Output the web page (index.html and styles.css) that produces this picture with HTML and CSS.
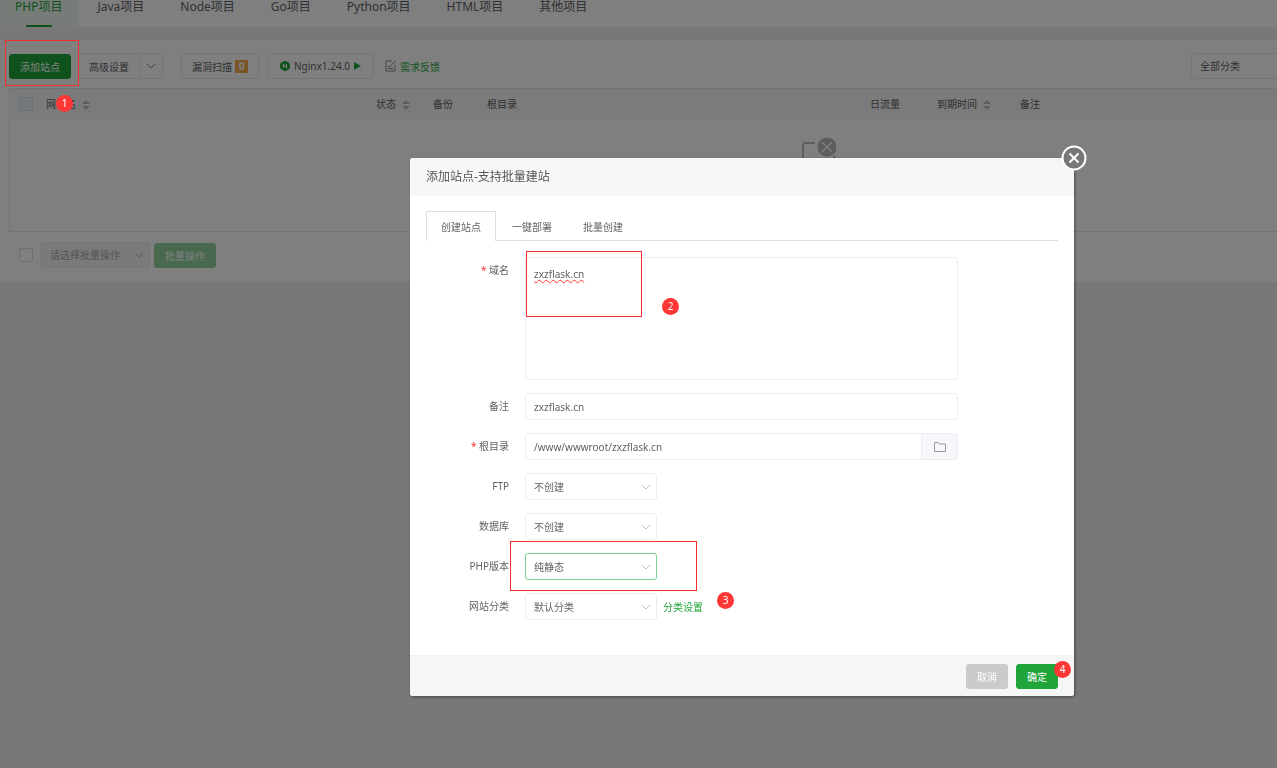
FILE: index.html
```
<!DOCTYPE html>
<html lang="zh-CN">
<head>
    <meta charset="UTF-8">
    <meta name="viewport" content="width=device-width, initial-scale=1.0">
    <title>网站管理 - 添加站点</title>
    <link rel="stylesheet" href="styles.css">
</head>
<body>
    <nav class="project-tabs">
        <a href="#" class="active">PHP项目</a>
        <a href="#">Java项目</a>
        <a href="#">Node项目</a>
        <a href="#">Go项目</a>
        <a href="#">Python项目</a>
        <a href="#">HTML项目</a>
        <a href="#">其他项目</a>
    </nav>

    <main class="panel">
        <div class="toolbar">
            <div class="add-wrap">
                <button type="button" class="btn btn-green">添加站点</button>
                <span class="mark-box mark-box-add"></span>
                <span class="mark mark-add">1</span>
            </div>
            <div class="btn-group">
                <button type="button" class="btn btn-plain">高级设置</button>
                <button type="button" class="btn btn-plain btn-arrow" aria-label="更多设置">
                    <svg width="10" height="10" viewBox="0 0 10 10"><path d="M1 3l4 4 4-4" fill="none" stroke="#888" stroke-width="1"/></svg>
                </button>
            </div>
            <button type="button" class="btn btn-plain btn-scan">漏洞扫描<span class="count">0</span></button>
            <button type="button" class="btn btn-plain btn-nginx">
                <svg width="10" height="10" viewBox="0 0 10 10"><path d="M5 0l4.3 2.5v5L5 10 .7 7.5v-5z" fill="#20a53a" stroke="#20a53a"/><path d="M3.4 7V3l3.2 4V3" fill="none" stroke="#fff" stroke-width="1"/></svg>
                Nginx1.24.0
                <svg width="7" height="8" viewBox="0 0 7 8"><path d="M0 0l7 4-7 4z" fill="#20a53a"/></svg>
            </button>
            <a href="#" class="feedback">
                <svg width="11" height="12" viewBox="0 0 11 12"><path d="M7 1H1v10h9V5M3 8.5h5M3 6.5h2M5 6.5L10.5 1" fill="none" stroke="#888" stroke-width="1"/></svg>
                需求反馈
            </a>
            <select class="category-filter" aria-label="分类">
                <option>全部分类</option>
            </select>
        </div>

        <div class="table-wrap">
            <table class="site-table">
                <thead>
                    <tr>
                        <th class="col-check"><input type="checkbox" class="check check-head" aria-label="全选"></th>
                        <th class="col-name">网站名<svg class="sort" width="8" height="12" viewBox="0 0 8 12"><path d="M0 5l4-4 4 4zM0 7l4 4 4-4z" fill="#bbb"/></svg></th>
                        <th class="col-status">状态<svg class="sort" width="8" height="12" viewBox="0 0 8 12"><path d="M0 5l4-4 4 4zM0 7l4 4 4-4z" fill="#bbb"/></svg></th>
                        <th class="col-backup">备份</th>
                        <th class="col-root">根目录</th>
                        <th class="col-flow">日流量</th>
                        <th class="col-expire">到期时间<svg class="sort" width="8" height="12" viewBox="0 0 8 12"><path d="M0 5l4-4 4 4zM0 7l4 4 4-4z" fill="#bbb"/></svg></th>
                        <th>备注</th>
                    </tr>
                </thead>
                <tbody>
                    <tr>
                        <td colspan="8" class="empty">
                            <svg width="36" height="40" viewBox="0 0 36 40">
                                <path d="M15 6H6a3 3 0 0 0-3 3v25a3 3 0 0 0 3 3h25a3 3 0 0 0 3-3V19" fill="none" stroke="#bbb" stroke-width="2"/>
                                <circle cx="27" cy="10" r="9.5" fill="#bbb"/>
                                <path d="M22 5l10 10M32 5L22 15" stroke="#fff" stroke-width="1.2"/>
                            </svg>
                        </td>
                    </tr>
                </tbody>
            </table>
        </div>

        <div class="batch-bar">
            <input type="checkbox" class="check" aria-label="选择全部站点">
            <select class="batch-select" aria-label="批量操作" disabled>
                <option>请选择批量操作</option>
            </select>
            <button type="button" class="btn btn-green btn-faded">批量操作</button>
        </div>
    </main>

    <div class="overlay">
        <div class="modal" role="dialog" aria-labelledby="modal-title">
            <button type="button" class="close" aria-label="关闭">
                <svg width="26" height="26" viewBox="0 0 26 26"><circle cx="13" cy="13" r="11.5" fill="#777" stroke="#fff" stroke-width="2"/><path d="M8.5 8.5l9 9M17.5 8.5l-9 9" stroke="#fff" stroke-width="2"/></svg>
            </button>
            <h2 class="modal-title" id="modal-title">添加站点-支持批量建站</h2>

            <div class="modal-body">
                <div class="modal-tabs">
                    <button type="button" class="active">创建站点</button>
                    <button type="button">一键部署</button>
                    <button type="button">批量创建</button>
                </div>

                <form class="site-form" id="site-form">
                    <div class="row">
                        <label for="domain"><i>*</i> 域名</label>
                        <div class="field">
                            <textarea id="domain" class="control" spellcheck="false">zxzflask.cn</textarea>
                            <span class="mark-box mark-box-domain"></span>
                            <span class="mark mark-domain">2</span>
                        </div>
                    </div>
                    <div class="row">
                        <label for="remark">备注</label>
                        <div class="field"><input type="text" id="remark" class="control" value="zxzflask.cn"></div>
                    </div>
                    <div class="row">
                        <label for="root"><i>*</i> 根目录</label>
                        <div class="field">
                            <input type="text" id="root" class="control control-path" value="/www/wwwroot/zxzflask.cn">
                            <button type="button" class="folder" aria-label="选择目录">
                                <svg width="14" height="12" viewBox="0 0 14 12"><path d="M1.5 1.5H5L6.500 3h6v7.500h-11z" fill="none" stroke="#999" stroke-width="1"/></svg>
                            </button>
                        </div>
                    </div>
                    <div class="row">
                        <label for="ftp">FTP</label>
                        <div class="field">
                            <select id="ftp" class="control"><option>不创建</option></select>
                        </div>
                    </div>
                    <div class="row">
                        <label for="database">数据库</label>
                        <div class="field">
                            <select id="database" class="control"><option>不创建</option></select>
                        </div>
                    </div>
                    <div class="row">
                        <label for="php">PHP版本</label>
                        <div class="field">
                            <select id="php" class="control focused"><option>纯静态</option></select>
                            <span class="mark-box mark-box-php"></span>
                        </div>
                    </div>
                    <div class="row">
                        <label for="category">网站分类</label>
                        <div class="field">
                            <select id="category" class="control"><option>默认分类</option></select>
                            <a href="#" class="category-link">分类设置</a>
                            <span class="mark mark-category">3</span>
                        </div>
                    </div>
                </form>
            </div>

            <div class="modal-footer">
                <button type="button" class="btn btn-cancel">取消</button>
                <button type="submit" form="site-form" class="btn btn-green btn-ok">确定<span class="mark mark-ok">4</span></button>
            </div>
        </div>
    </div>
</body>
</html>
```
FILE: styles.css
```
* {
    box-sizing: border-box;
}

body {
    margin: 0;
    min-height: 100vh;
    overflow: hidden;
    background-color: #f0f0f0;
    color: #606266;
    font-family: "Noto Sans", "Noto Sans CJK SC", sans-serif;
    font-size: 10px;
}

button, input, select, textarea {
    font: inherit;
    color: inherit;
    margin: 0;
}

button {
    cursor: pointer;
}

a {
    color: #20a53a;
    text-decoration: none;
}

svg {
    display: block;
    flex: none;
}

/* project tabs */
.project-tabs {
    display: flex;
    height: 27px;
    background-color: #fff;
    font-size: 12px;
    line-height: 14px;
}

.project-tabs a {
    padding: 0 18px;
    color: #606266;
    white-space: nowrap;
}

.project-tabs .active {
    display: flex;
    flex-direction: column;
    justify-content: space-between;
    align-items: center;
    padding: 0 17px 0 15px;
    background-color: #eef8f0;
    color: #20a53a;
}

.project-tabs .active::after {
    content: "";
    width: 26px;
    height: 2px;
    background-color: #20a53a;
}

/* page panel */
.panel {
    margin-top: 13px;
    padding: 13px 0 14px 9px;
    background-color: #fff;
}

.toolbar {
    display: flex;
    align-items: center;
    height: 26px;
}

.btn {
    display: inline-flex;
    align-items: center;
    justify-content: center;
    height: 25px;
    padding: 0 10px;
    border: 1px solid transparent;
    border-radius: 3px;
    white-space: nowrap;
}

.btn-green {
    background-color: #20a53a;
    border-color: #20a53a;
    color: #fff;
}

.btn-plain {
    height: 26px;
    background-color: #fff;
    border-color: #ebebeb;
}

.btn-faded {
    background-color: #90d29d;
    border-color: #90d29d;
}

.btn-group {
    display: flex;
    margin: 0 18px 0 7px;
}

.btn-group .btn:first-child {
    border-radius: 3px 0 0 3px;
}

.btn-group .btn-arrow {
    margin-left: -1px;
    padding: 0 6px;
    border-radius: 0 3px 3px 0;
}

.btn-scan {
    margin-right: 8px;
    gap: 3px;
}

.count {
    width: 13px;
    background-color: #f0ad4e;
    color: #fff;
    font-weight: bold;
    line-height: 13px;
}

.btn-nginx {
    padding: 0 12px;
    gap: 4px;
}

.feedback {
    display: flex;
    align-items: center;
    gap: 4px;
    margin-left: 11px;
}

select {
    appearance: none;
    padding: 0 24px 0 8px;
    border: 1px solid #ebebeb;
    border-radius: 3px;
    background: #fff url("data:image/svg+xml,%3Csvg xmlns='http://www.w3.org/2000/svg' width='10' height='10'%3E%3Cpath d='M1 3l4 4 4-4' fill='none' stroke='%23bbb'/%3E%3C/svg%3E") no-repeat right 5px center;
    opacity: 1;
}

.category-filter {
    width: 106px;
    height: 26px;
    margin: 0 -20px 0 auto;
    background-position: right 10px center;
}

.check {
    appearance: none;
    display: block;
    width: 14px;
    height: 14px;
    border: 1px solid #dcdfe6;
    border-radius: 2px;
    background-color: #fff;
}

.check-head {
    background-color: #e9eff8;
    border-color: #d5deed;
}

/* site table, wider than the window */
.table-wrap {
    margin-top: 9px;
    overflow: hidden;
}

.site-table {
    width: 100%;
    min-width: 1618px;
    table-layout: fixed;
    border: 1px solid #e6e6e6;
    border-spacing: 0;
}

.site-table th {
    height: 31px;
    padding: 0 0 2px;
    background-color: #f6f6f6;
    font-weight: normal;
    text-align: left;
}

.site-table .col-check {
    width: 36px;
    padding-left: 9px;
}

.col-name {
    width: 330px;
}

.col-status {
    width: 57px;
}

.col-backup {
    width: 54px;
}

.col-root {
    width: 383px;
}

.col-flow {
    width: 67px;
}

.col-expire {
    width: 83px;
}

.sort {
    display: inline-block;
    margin-left: 6px;
    vertical-align: middle;
}

.empty {
    height: 111px;
    padding: 17px 0 0;
    vertical-align: top;
}

.empty svg {
    margin: 0 auto;
}

.batch-bar {
    display: flex;
    align-items: center;
    gap: 4px;
    margin-top: 10px;
    padding-left: 10px;
}

.batch-bar .check {
    margin-right: 4px;
}

.batch-select {
    width: 109px;
    height: 26px;
    background-color: #f5f5f5;
    color: #aaa;
}

/* numbered step marks */
.mark-box {
    position: absolute;
    border: 1px solid #f52f2f;
    pointer-events: none;
}

.mark {
    position: absolute;
    width: 17px;
    height: 17px;
    border-radius: 50%;
    background-color: #ff3636;
    color: #fff;
    line-height: 17px;
    text-align: center;
}

.add-wrap {
    position: relative;
}

.mark-box-add {
    z-index: 20;
    top: -14px;
    left: -4px;
    width: 74px;
    height: 46px;
}

.mark-add {
    z-index: 20;
    top: 41px;
    left: 47px;
}

.mark-box-domain {
    top: -6px;
    left: 1px;
    width: 116px;
    height: 66px;
}

.mark-domain {
    top: 41px;
    left: 137px;
}

.mark-box-php {
    top: -12px;
    left: -15px;
    width: 187px;
    height: 50px;
}

.mark-category {
    top: -1px;
    left: 192px;
}

.mark-ok {
    top: -4px;
    right: -14px;
}

/* dialog */
.overlay {
    position: fixed;
    inset: 0;
    z-index: 10;
    background-color: rgba(0, 0, 0, 0.5);
}

.modal {
    position: relative;
    width: 52%;
    min-width: 600px;
    margin: 158px 0 0 410px;
    border-radius: 3px;
    background-color: #fff;
    box-shadow: 1px 1px 3px rgba(0, 0, 0, 0.4);
}

.close {
    position: absolute;
    top: -13px;
    right: -13px;
    padding: 0;
    border: none;
    background: none;
}

.modal-title {
    margin: 0;
    padding: 0 16px;
    border-radius: 3px 3px 0 0;
    background-color: #f7f7f7;
    color: #555;
    font-size: 12px;
    font-weight: normal;
    line-height: 38px;
}

.modal-body {
    padding: 15px 16px 35px;
}

.modal-tabs {
    display: flex;
    gap: 1px;
    border-bottom: 1px solid #dcdfe6;
}

.modal-tabs button {
    height: 29px;
    padding: 0 14px;
    border: 1px solid transparent;
    border-bottom: none;
    background: none;
}

.modal-tabs .active {
    height: 30px;
    margin-bottom: -1px;
    border-color: #dcdfe6;
    background-color: #fff;
}

.site-form {
    display: flex;
    flex-direction: column;
    gap: 13px;
    padding-top: 16px;
}

.row {
    display: flex;
    gap: 16px;
}

.row label {
    width: 83px;
    line-height: 27px;
    text-align: right;
}

.row label i {
    color: #f33;
    font-style: normal;
}

.field {
    position: relative;
    display: flex;
    align-items: center;
    flex: 1;
    max-width: 433px;
}

.control {
    width: 100%;
    height: 27px;
    padding: 0 8px;
    border: 1px solid #ebedf0;
    border-radius: 3px;
    outline: none;
}

textarea.control {
    height: 123px;
    padding: 8px;
    line-height: 16px;
    resize: none;
    text-decoration: underline wavy #f33 1px;
}

select.control {
    width: 132px;
}

.control.focused {
    border-color: #7fcf8f;
}

.control-path {
    border-radius: 3px 0 0 3px;
}

.folder {
    display: flex;
    align-items: center;
    justify-content: center;
    flex: none;
    width: 37px;
    height: 27px;
    margin-left: -1px;
    padding: 0;
    border: 1px solid #ebedf0;
    border-radius: 0 3px 3px 0;
    background-color: #f5f7fa;
}

.category-link {
    margin-left: 6px;
}

.modal-footer {
    display: flex;
    justify-content: flex-end;
    gap: 8px;
    padding: 8px 16px 7px;
    border-top: 1px solid #edf1f0;
    border-radius: 0 0 3px 3px;
    background-color: #f5f7f7;
}

.btn-cancel {
    background-color: #cbcbcb;
    color: #fff;
}

.btn-ok {
    position: relative;
}
```
